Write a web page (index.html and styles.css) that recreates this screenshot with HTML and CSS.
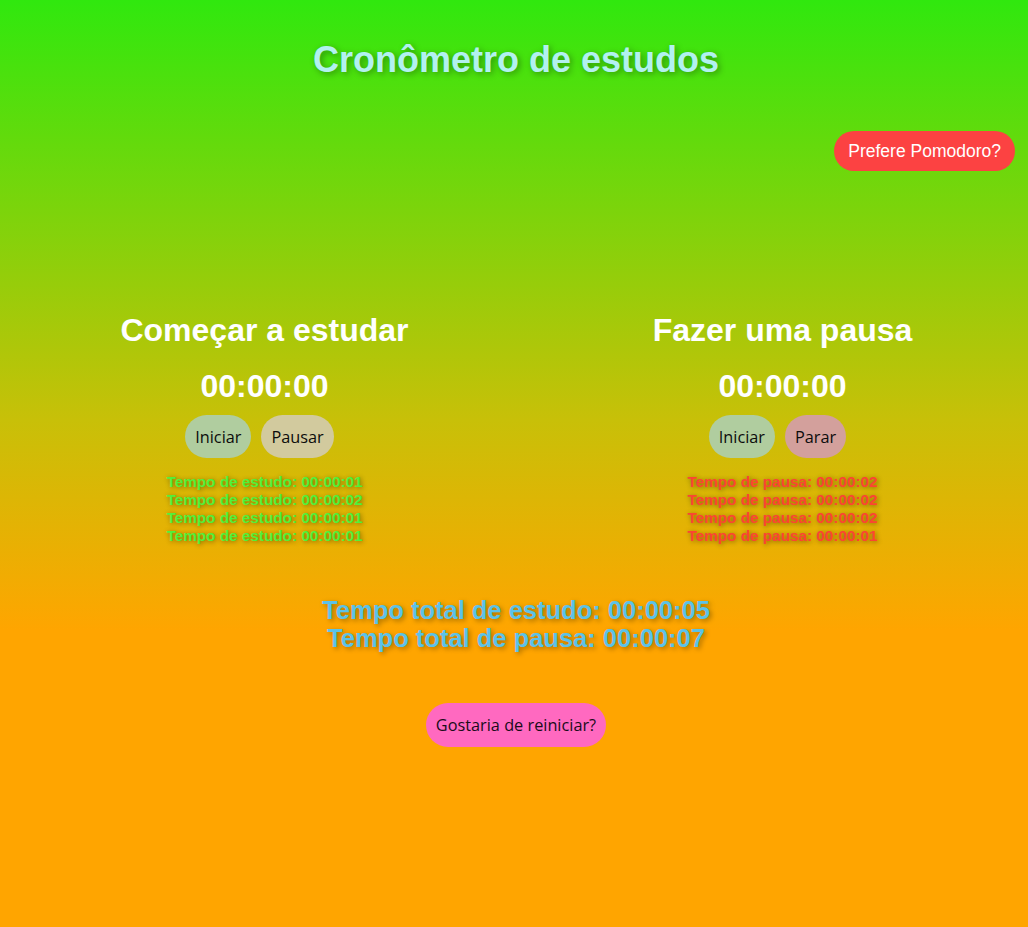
FILE: index.html
```html
<!DOCTYPE html>
<html lang="pt-BR">
<head>
<meta charset="utf-8">
<title>Cronômetro de estudos</title>
<link rel="stylesheet" href="styles.css">
</head>
<body>
  <header class="header">
    <h1 class="title">Cronômetro de estudos</h1>
    <div class="mode-row">
      <button class="btn-pomodoro">Prefere Pomodoro?</button>
    </div>
  </header>

  <main class="timers">
    <section class="timer-col">
      <h2 class="timer-title">Começar a estudar</h2>
      <div class="timer-display">00:00:00</div>
      <div class="timer-actions">
        <button class="btn btn-start">Iniciar</button><button class="btn btn-pause">Pausar</button>
      </div>
      <ul class="log log-study">
        <li>Tempo de estudo: 00:00:01</li>
        <li>Tempo de estudo: 00:00:02</li>
        <li>Tempo de estudo: 00:00:01</li>
        <li>Tempo de estudo: 00:00:01</li>
      </ul>
    </section>
    <section class="timer-col">
      <h2 class="timer-title">Fazer uma pausa</h2>
      <div class="timer-display">00:00:00</div>
      <div class="timer-actions">
        <button class="btn btn-start">Iniciar</button><button class="btn btn-stop">Parar</button>
      </div>
      <ul class="log log-break">
        <li>Tempo de pausa: 00:00:02</li>
        <li>Tempo de pausa: 00:00:02</li>
        <li>Tempo de pausa: 00:00:02</li>
        <li>Tempo de pausa: 00:00:01</li>
      </ul>
    </section>
  </main>

  <section class="totals">
    <p>Tempo total de estudo: 00:00:05</p>
    <p>Tempo total de pausa: 00:00:07</p>
  </section>

  <div class="reset-row">
    <button class="btn-reset">Gostaria de reiniciar?</button>
  </div>
</body>
</html>
```

FILE: styles.css
```css
html, body {
  margin: 0;
  padding: 0;
}

body {
  min-height: 927px;
  background: linear-gradient(to bottom, #30e80e 0px, #c8c008 420px, #ffa500 630px, #ffa500 100%);
  font-family: "Liberation Sans", Arial, sans-serif;
  text-align: center;
}

.header {
  padding: 39px 0 0 0;
}

.title {
  margin: 0 0 0 4px;
  font-size: 36px;
  line-height: 42px;
  font-weight: bold;
  color: #b2f1f0;
  text-shadow: 2px 2px 6px rgba(0, 0, 0, 0.35);
}

.mode-row {
  display: flex;
  justify-content: flex-end;
  padding: 50px 13px 0 0;
}

.btn-pomodoro {
  height: 40px;
  padding: 0 14px;
  border: none;
  border-radius: 20px;
  background: #fc4242;
  color: #ffffff;
  font-family: "Liberation Sans", Arial, sans-serif;
  font-size: 17.5px;
}

.timers {
  display: flex;
  justify-content: center;
  gap: 78px;
  padding: 141px 0 0 19px;
}

.timer-col {
  width: 440px;
  display: flex;
  flex-direction: column;
  align-items: center;
}

.timer-title {
  margin: 0;
  font-size: 32px;
  line-height: 37px;
  color: #ffffff;
}

.timer-display {
  margin-top: 19px;
  font-size: 32px;
  line-height: 37px;
  font-weight: bold;
  color: #ffffff;
}

.timer-actions {
  margin-top: 10px;
  display: flex;
}

.btn {
  height: 43px;
  padding: 0 10px;
  margin: 0 10px 0 0;
  border: none;
  border-radius: 22px;
  color: #0c0c0c;
  font-family: "Open Sans", "Segoe UI", sans-serif;
  font-size: 16.3px;
}

.btn-start { background: #b0cd9f; }
.btn-pause { background: #d2ca9e; }
.btn-stop  { background: #d3a09c; }

.log {
  list-style: none;
  margin: 15px 0 0 0;
  padding: 0;
  font-size: 15.3px;
  line-height: 18px;
  font-weight: bold;
}

.log-study {
  color: #52f03a;
  text-shadow: 1px 1px 5px rgba(0, 0, 0, 0.45);
}

.log-break {
  color: #fb4533;
  text-shadow: 1px 1px 5px rgba(0, 0, 0, 0.45);
}

.totals {
  margin: 51px 0 0 0;
  padding-left: 4px;
}

.totals p {
  margin: 0;
  font-size: 25.5px;
  line-height: 28px;
  font-weight: bold;
  color: #5cc2e8;
  text-shadow: 2px 2px 5px rgba(0, 0, 0, 0.35);
}

.reset-row {
  margin-top: 51px;
  display: flex;
  justify-content: center;
  padding-left: 4px;
}

.btn-reset {
  height: 44px;
  padding: 0 10px;
  border: none;
  border-radius: 22px;
  background: #ff69c0;
  color: #1a0c1a;
  font-family: "Open Sans", "Segoe UI", sans-serif;
  font-size: 16.3px;
}
```
